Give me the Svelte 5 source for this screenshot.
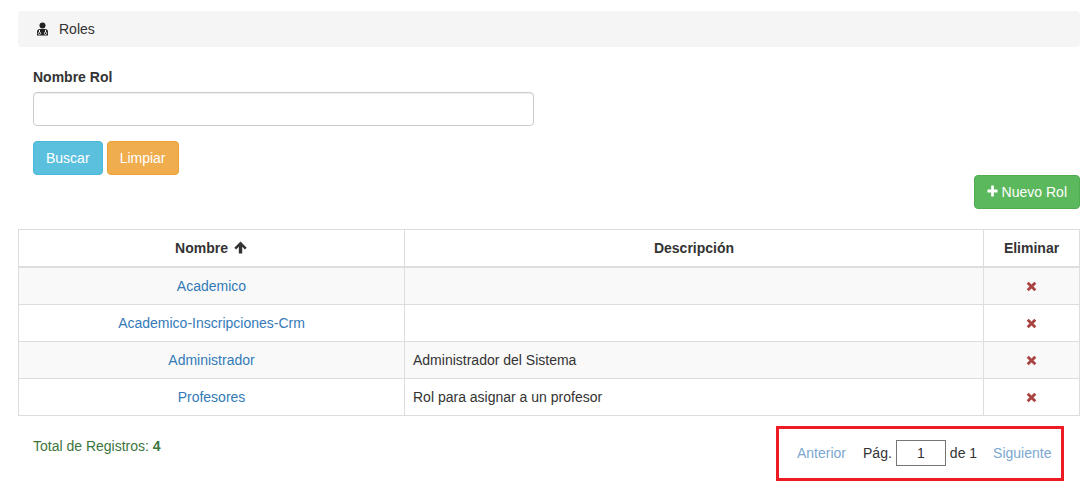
<script lang="ts">
  const roles = [
    { name: 'Academico', description: '' },
    { name: 'Academico-Inscripciones-Crm', description: '' },
    { name: 'Administrador', description: 'Administrador del Sistema' },
    { name: 'Profesores', description: 'Rol para asignar a un profesor' }
  ];
</script>

<div class="page">
  <div class="panel-heading">
    <svg class="role-icon" width="13" height="14" viewBox="0 0 13 14">
      <circle cx="6.5" cy="3.6" r="3" fill="#222" />
      <path d="M1 13.5V10q0-3 3-3h5q3 0 3 3v3.500z" fill="#222" />
      <path d="M3.500 8v2M9.500 8v2" stroke="#fff" stroke-width="1" />
      <circle cx="3.500" cy="11.300" r="1.200" fill="none" stroke="#fff" stroke-width="0.800" />
      <circle cx="9.500" cy="11.300" r="1.200" fill="none" stroke="#fff" stroke-width="0.800" />
    </svg>
    <span>Roles</span>
  </div>

  <form class="search" onsubmit={(e) => e.preventDefault()}>
    <label for="nombre">Nombre Rol</label>
    <input id="nombre" type="text" />
    <div class="actions">
      <button class="btn btn-info">Buscar</button>
      <button class="btn btn-warning" type="reset">Limpiar</button>
    </div>
  </form>

  <div class="toolbar">
    <button class="btn btn-success">
      <svg width="11" height="12" viewBox="0 0 12 12" preserveAspectRatio="none">
        <path d="M4.500 0.500h3v4h4v3h-4v4h-3v-4h-4v-3h4z" fill="#fff" />
      </svg>
      Nuevo Rol
    </button>
  </div>

  <table>
    <thead>
      <tr>
        <th class="col-name">
          Nombre
          <svg class="sort" width="13" height="13" viewBox="0 0 13 13">
            <path d="M6.500 0.500L12.700 6.700 10.900 8.500 8.200 5.800V12.500H4.800V5.800L2.100 8.500 0.300 6.700z" fill="#333" />
          </svg>
        </th>
        <th>Descripción</th>
        <th class="col-delete">Eliminar</th>
      </tr>
    </thead>
    <tbody>
      {#each roles as role}
        <tr>
          <td class="name"><a href="#top">{role.name}</a></td>
          <td>{role.description}</td>
          <td class="delete">
            <svg width="11" height="11" viewBox="0 0 11 11">
              <path d="M2.700 0.700L5.500 3.500 8.300 0.700 10.300 2.700 7.500 5.500 10.300 8.300 8.300 10.300 5.500 7.500 2.700 10.300 0.700 8.300 3.500 5.500 0.700 2.700z" fill="#a94442" />
            </svg>
          </td>
        </tr>
      {/each}
    </tbody>
  </table>

  <div class="footer">
    <div class="total">Total de Registros: <b>4</b></div>
    <div class="pager">
      <a href="#top">Anterior</a>
      <span class="page-label">Pág.</span>
      <input type="text" value="1" />
      <span class="page-of">de 1</span>
      <a href="#top">Siguiente</a>
    </div>
  </div>
</div>

<style>
  :global(body) {
    margin: 0;
    background: #fff;
    color: #333;
    font-family: "Liberation Sans", Arial, sans-serif;
    font-size: 14px;
    line-height: 20px;
  }

  .page {
    padding: 11px 8px 0 18px;
  }

  .panel-heading {
    display: flex;
    align-items: center;
    height: 36px;
    padding-left: 18px;
    background: #f5f5f5;
    border-radius: 4px;
    box-sizing: border-box;
  }

  .role-icon {
    margin-right: 10px;
  }

  .search {
    padding: 20px 0 0 15px;
  }

  label {
    display: block;
    font-weight: 700;
    margin-bottom: 5px;
  }

  .search input {
    display: block;
    width: 501px;
    height: 34px;
    box-sizing: border-box;
    border: 1px solid #ccc;
    border-radius: 4px;
    box-shadow: inset 0 1px 1px rgba(0, 0, 0, 0.075);
  }

  .actions {
    display: flex;
    gap: 4px;
    margin-top: 15px;
  }

  .btn {
    height: 34px;
    padding: 6px 12px;
    box-sizing: border-box;
    border: 1px solid transparent;
    border-radius: 4px;
    color: #fff;
    font: inherit;
  }

  .btn-info {
    background: #5bc0de;
    border-color: #46b8da;
  }

  .btn-warning {
    min-width: 72px;
    background: #f0ad4e;
    border-color: #eea236;
  }

  .btn-success {
    background: #5cb85c;
    border-color: #4cae4c;
  }

  .toolbar {
    display: flex;
    justify-content: flex-end;
  }

  table {
    width: 1062px;
    margin-top: 20px;
    border-collapse: collapse;
    table-layout: fixed;
  }

  th,
  td {
    height: 37px;
    padding: 8px;
    box-sizing: border-box;
    border: 1px solid #ddd;
  }

  th {
    text-align: center;
    border-bottom-width: 2px;
  }

  .col-name {
    width: 386px;
  }

  .col-delete {
    width: 96px;
  }

  .sort {
    margin: 0 1px 0 2px;
    vertical-align: -1px;
  }

  tbody tr:nth-child(odd) {
    background: #f9f9f9;
  }

  .name,
  .delete {
    text-align: center;
  }

  .delete svg {
    vertical-align: -1px;
  }

  a {
    color: #337ab7;
    text-decoration: none;
  }

  .footer {
    display: flex;
    justify-content: space-between;
    align-items: flex-start;
    margin-top: 10px;
    padding: 0 16px 0 15px;
  }

  .total {
    margin-top: 10px;
    color: #3c763d;
  }

  .pager {
    display: flex;
    align-items: center;
    width: 288px;
    height: 55px;
    box-sizing: border-box;
    padding: 0 0 2px 18px;
    border: 3px solid #ed1c24;
  }

  .pager a {
    color: #7ba7d0;
  }

  .page-label {
    margin-left: 17px;
  }

  .pager input {
    width: 50px;
    height: 26px;
    margin-left: 4px;
    padding: 0;
    box-sizing: border-box;
    border: 1px solid #767676;
    text-align: center;
    font: inherit;
    color: #333;
  }

  .page-of {
    margin: 0 16px 0 4px;
  }
</style>
